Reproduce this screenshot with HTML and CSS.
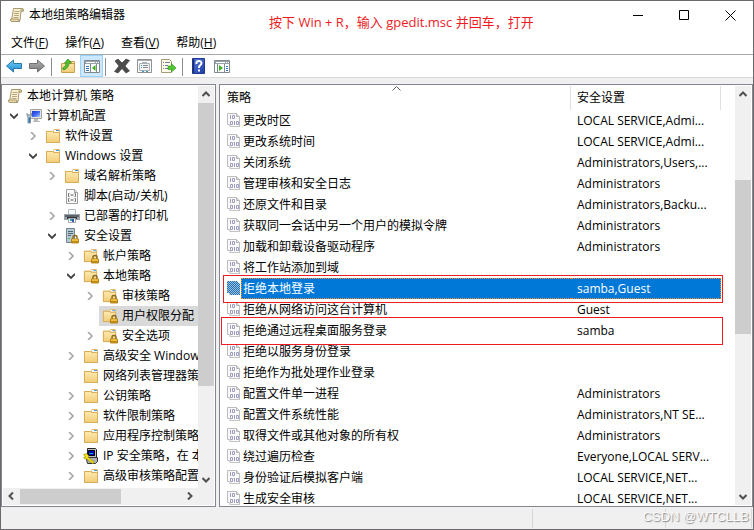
FILE: index.html
```html
<!DOCTYPE html>
<html lang="zh-CN">
<head>
  <meta charset="UTF-8">
  <meta name="viewport" content="width=device-width, initial-scale=1.0">
  <title>本地组策略编辑器</title>
  <link rel="stylesheet" href="styles.css">
</head>
<body>

<svg class="sprite" aria-hidden="true">
  <defs>
    <linearGradient id="gFolder" x1="0" y1="0" x2="0" y2="1"><stop offset="0" stop-color="#ffeab0"/><stop offset="1" stop-color="#f0cc78"/></linearGradient>
    <linearGradient id="gBlue" x1="0" y1="0" x2="0" y2="1"><stop offset="0" stop-color="#7fd0f5"/><stop offset="1" stop-color="#1088d8"/></linearGradient>
    <linearGradient id="gGray" x1="0" y1="0" x2="0" y2="1"><stop offset="0" stop-color="#b4b4b4"/><stop offset="1" stop-color="#777"/></linearGradient>
    <linearGradient id="gHelp" x1="0" y1="0" x2="1" y2="1"><stop offset="0" stop-color="#5c80dc"/><stop offset="1" stop-color="#1c3aa4"/></linearGradient>
    <linearGradient id="gScreen" x1="0" y1="0" x2="1" y2="1"><stop offset="0" stop-color="#2038d0"/><stop offset=".5" stop-color="#3c64f0"/><stop offset="1" stop-color="#a8d0ff"/></linearGradient>
    <pattern id="dither" width="2" height="2" patternUnits="userSpaceOnUse"><path fill="#0078d7" d="M0 0h1v1H0zM1 1h1v1H1z"/></pattern>
  </defs>
  <symbol id="scroll" viewBox="0 0 16 16">
    <path fill="#f8f0d0" stroke="#a89a70" d="M4.500 1.500h9q1.500.5 1 2.500h-2.500l-1 9.500H2.500z"/>
    <path fill="#e8dba8" stroke="#a89a70" d="M12 4q-.5-2 1-2.500 2 0 1.500 2.500zM1.500 12h8q0 2.500 1.500 2.500H3Q1 14.500 1.500 12z"/>
    <path stroke="#b8a880" d="M5.500 4.500h5M5 6.500h5M5 8.500h5M4.500 10.500h5"/>
  </symbol>
  <symbol id="folder" viewBox="0 0 16 16">
    <path fill="#e4b962" d="M1 3h7l1-2h5l1 1v13H1z"/>
    <path fill="#fff" d="M9 2h5v2H9z"/>
    <path fill="#3c98e8" d="M11 2h3v1h-3z"/>
    <path fill="url(#gFolder)" stroke="#d8ac58" d="M1.500 3.500h6l1 1h6v10h-13z"/>
  </symbol>
  <symbol id="padlock" viewBox="0 0 8 9">
    <path fill="none" stroke="#8c6a20" stroke-width="1.400" d="M2 5V2.500Q2 1 4 1t2 1.500V5"/>
    <path fill="#e0a820" stroke="#a87408" stroke-width=".8" d="M.5 4.500h7v4h-7z"/>
    <path stroke="#ffd860" d="M1 5.500h6"/>
    <path stroke="#b07c10" d="M1 7.300h6"/>
  </symbol>
  <symbol id="folder-lock" viewBox="0 0 16 16">
    <use href="#folder" x="0" y="0" width="15" height="15"/>
    <use href="#padlock" x="8" y="6" width="8" height="10"/>
  </symbol>
  <symbol id="computer" viewBox="0 0 16 16">
    <path fill="#e4e4dc" stroke="#a4a4a0" d="M4.500 1.500h11v9h-11z"/>
    <path fill="url(#gScreen)" d="M6 3h8v6H6z"/>
    <path fill="#b8b8b4" d="M8 11h4v2h2v1H7v-1h1z"/>
    <path fill="#b8c8d0" stroke="#708090" stroke-width=".8" d="M1 5.500v2l1 1.500v6h2.500V9l1-1.500v-2L4.500 7H2z"/>
    <path stroke="#2878b8" stroke-width="1.500" d="M3.300 9.500v5"/>
  </symbol>
  <symbol id="script" viewBox="0 0 16 16">
    <path fill="#fafafa" stroke="#a0a0a0" d="M2.500 1.500h8l3 3v11h-11z"/>
    <path fill="#ddd" stroke="#a0a0a0" d="M10.500 1.500v3h3"/>
    <path fill="none" stroke="#777" d="M5.500 5.500h-1v3h1M10.500 5.500h1v3h-1M5.500 10.500h-1v3h1M10.500 10.500h1v3h-1"/>
    <path stroke="#555" d="M6.500 7h3M6.500 12h3"/>
  </symbol>
  <symbol id="printer" viewBox="0 0 16 16">
    <path fill="#f4f8fa" stroke="#b4bcc4" d="M4.500 1.500h7v5h-7z"/>
    <path fill="#9aa2aa" d="M0 6h16v6H0z"/>
    <path fill="#5c646c" d="M1 7h14v2H1z"/>
    <path fill="#333" d="M3 9h10v2H3z"/>
    <path fill="#fff" stroke="#a0a8b0" d="M4.500 10.500h7v4h-7z"/>
    <path fill="#38a0b0" d="M6 11h2v2H6z"/><path fill="#3858b8" d="M8 11h2v3H8z"/>
  </symbol>
  <symbol id="server" viewBox="0 0 16 16">
    <path fill="#b8c8d0" stroke="#708490" d="M2.500.5h8v14h-8z"/>
    <path stroke="#50687c" d="M4 3.500h5M4 5.500h5M4 7.500h3"/>
    <path fill="#40b860" d="M4 10h2v1H4z"/>
    <use href="#padlock" x="7" y="6" width="8" height="10"/>
  </symbol>
  <symbol id="ipsec" viewBox="0 0 16 16">
    <path fill="#c0c0c0" stroke="#222" d="M4.500.500h8l1 1v8h-9z"/>
    <path fill="#0000c0" stroke="#000" d="M5.500 2.500h6v5h-6z"/>
    <path stroke="#00b0d0" d="M6 5.500h4"/>
    <path fill="#b0b0b0" stroke="#333" d="M3.500 11.500l3-2h8v4l-2 2h-8z"/>
    <path fill="#f4e010" stroke="#948400" stroke-width=".6" d="M.5 6.500l3-1 2 2v2l5.500 4.500-1 2-6-5H2L.5 9.500l2-.5z"/>
  </symbol>
  <symbol id="policy" viewBox="0 0 14 16">
    <path fill="#fafafa" stroke="#bcbcbc" d="M.5 1.500h9l3 3v10h-9l-1-2h-2z"/>
    <path fill="#ddd" stroke="#b4b4b4" d="M9.500 1.500v3h3"/>
    <path fill="#c4c4c4" d="M2 14h11v1H3z"/>
    <g fill="none" stroke="#9c9cc0"><path d="M3.500 3v4M5.500 3.500h2v3h-2zM3.500 9.500h2v3h-2zM7.500 9v4M9.500 9.500h2v3h-2z"/></g>
  </symbol>
  <symbol id="policy-selected" viewBox="0 0 14 16">
    <path fill="#b8b8b8" d="M0 1h10l3 3v11H3l-1-2H0z"/>
    <path fill="url(#dither)" d="M0 1h10l3 3v11H3l-1-2H0z"/>
  </symbol>
  <symbol id="back" viewBox="0 0 16 16">
    <path fill="url(#gBlue)" stroke="#2878a8" stroke-linejoin="round" d="M.5 8l7-6v3.500h8v5h-8V14z"/>
  </symbol>
  <symbol id="forward" viewBox="0 0 16 16">
    <path fill="url(#gGray)" stroke="#707070" stroke-linejoin="round" d="M15.500 8l-7-6v3.500h-8v5h8V14z"/>
  </symbol>
  <symbol id="up" viewBox="0 0 16 16">
    <path fill="url(#gFolder)" stroke="#c8a050" d="M1.500 5.500h6l1-2h6v11h-13z"/>
    <path stroke="#c8a050" d="M9 5.500h5"/>
    <path fill="#50c030" stroke="#2c8c18" stroke-width=".7" d="M2.500 10Q6 9 6.200 5H4.500l3.500-4 3.500 4H9Q9 10 3.500 12z"/>
  </symbol>
  <symbol id="tree-pane" viewBox="0 0 16 16">
    <path fill="#fff" stroke="#808890" d="M.5 2.500h15v12H.5z"/>
    <path fill="#9aa2aa" d="M1 3h14v3H1z"/>
    <path fill="#fff" d="M2 4h9v1H2zM12 4h1v1h-1zM14 4h1v1h-1z"/>
    <path stroke="#808890" d="M6.500 6v8.500M12.500 6v8.500"/>
    <path stroke="#3878c0" d="M2 8.500h3M2 10.500h3M2 12.500h3"/>
    <path fill="#38b020" d="M11.500 7v6L8 10z"/>
  </symbol>
  <symbol id="action-pane" viewBox="0 0 16 16">
    <path fill="#fff" stroke="#808890" d="M.5 2.500h15v12H.5z"/>
    <path fill="#9aa2aa" d="M1 3h14v3H1z"/>
    <path fill="#fff" d="M2 4h9v1H2zM12 4h1v1h-1zM14 4h1v1h-1z"/>
    <path stroke="#808890" d="M3.500 6v8.500M10.500 6v8.500"/>
    <path stroke="#3878c0" d="M12 8.500h2M12 10.500h2M12 12.500h2"/>
    <path fill="#38b020" d="M5 7v6l4-3z"/>
  </symbol>
  <symbol id="delete" viewBox="0 0 16 16">
    <path fill="#4c4c4c" stroke="#333" stroke-width=".6" d="M1 3l3-2 4 4 4-4 3.500 1.500L11 8l4.500 5-3.500 2-4-4.500L4 15l-3.500-1.500L5 8z"/>
  </symbol>
  <symbol id="properties" viewBox="0 0 16 16">
    <path fill="#fff" stroke="#909090" d="M.5 1.500h14v13H.5z"/>
    <path stroke="#b0b0b0" d="M1 2.500h13"/>
    <path fill="#f4f4f4" stroke="#a8b0b8" d="M2.500 5.500h10v7h-10z"/>
    <path stroke="#a8b0b8" d="M5 4.500h5"/>
    <path stroke="#38a0c8" d="M4 7.500h1M4 9.500h1M5 13.500h2M9 13.500h2"/>
    <path stroke="#808890" d="M6 7.500h5M6 9.500h5"/>
  </symbol>
  <symbol id="export" viewBox="0 0 16 16">
    <path fill="#fffbe8" stroke="#a89c78" d="M1.500 1.500h8l2 2v11h-10z"/>
    <path stroke="#7080a0" d="M3 4.500h1M3 7.500h1M3 10.500h1M5 4.500h5M5 7.500h3M5 10.500h3"/>
    <path fill="#50c830" stroke="#30901c" stroke-width=".6" d="M8 8h3.500V5.500L16 10l-4.500 4v-2.500H8z"/>
  </symbol>
  <symbol id="help" viewBox="0 0 16 16">
    <path fill="url(#gHelp)" stroke="#203890" d="M1.500.5h12v15h-12z"/>
    <path stroke="#182c78" stroke-width="1.500" d="M2.500 1v14"/>
    <path fill="none" stroke="#fff" stroke-width="2" d="M5.500 6V4.500Q6 3 8 3t2.500 2Q10.500 6.500 9 7.500 8 8 8 10M8 11.500v2"/>
  </symbol>
  <symbol id="chev-up" viewBox="0 0 8 8"><path fill="none" stroke="#505050" stroke-width="2" d="M.5 6L4 2.500 7.500 6"/></symbol>
  <symbol id="chev-down" viewBox="0 0 8 8"><path fill="none" stroke="#505050" stroke-width="2" d="M.5 2L4 5.500 7.500 2"/></symbol>
  <symbol id="chev-left" viewBox="0 0 8 8"><path fill="none" stroke="#505050" stroke-width="2" d="M6 .5L2.500 4 6 7.500"/></symbol>
  <symbol id="chev-right" viewBox="0 0 8 8"><path fill="none" stroke="#505050" stroke-width="2" d="M2 .5L5.500 4 2 7.500"/></symbol>
  <symbol id="expanded" viewBox="0 0 8 8"><path fill="none" stroke="#404040" stroke-width="1.800" d="M0 2l4 4 4-4"/></symbol>
  <symbol id="collapsed" viewBox="0 0 8 8"><path fill="none" stroke="#a6a6a6" stroke-width="1.600" d="M2 0l4 4-4 4"/></symbol>
</svg>

<div class="window">
  <header class="titlebar">
    <svg class="icon"><use href="#scroll"/></svg>
    <h1>本地组策略编辑器</h1>
    <p class="note">按下 Win + R，输入 gpedit.msc 并回车，打开</p>
    <div class="controls">
      <button aria-label="最小化"><svg width="11" height="11"><path stroke="#000" d="M0 5.500h10"/></svg></button>
      <button aria-label="最大化"><svg width="11" height="11"><path fill="none" stroke="#000" d="M.5.5h9v9h-9z"/></svg></button>
      <button aria-label="关闭"><svg width="11" height="11"><path stroke="#000" d="M.5.5l10 10M10.500.5l-10 10"/></svg></button>
    </div>
  </header>

  <nav class="menubar">
    <button>文件(<u>F</u>)</button>
    <button>操作(<u>A</u>)</button>
    <button>查看(<u>V</u>)</button>
    <button>帮助(<u>H</u>)</button>
  </nav>

  <div class="toolbar">
    <button aria-label="后退"><svg class="icon"><use href="#back"/></svg></button>
    <button aria-label="前进"><svg class="icon"><use href="#forward"/></svg></button>
    <span class="sep"></span>
    <button aria-label="向上"><svg class="icon"><use href="#up"/></svg></button>
    <button class="active" aria-label="显示控制台树"><svg class="icon"><use href="#tree-pane"/></svg></button>
    <span class="sep"></span>
    <button aria-label="删除"><svg class="icon"><use href="#delete"/></svg></button>
    <button aria-label="属性"><svg class="icon"><use href="#properties"/></svg></button>
    <button aria-label="导出列表"><svg class="icon"><use href="#export"/></svg></button>
    <span class="sep"></span>
    <button aria-label="帮助"><svg class="icon"><use href="#help"/></svg></button>
    <button aria-label="显示操作窗格"><svg class="icon"><use href="#action-pane"/></svg></button>
  </div>

  <main class="panes">
    <section class="pane tree-pane">
      <div class="pane-row">
        <div class="tree">
          <div class="node root"><span class="item"><svg class="icon"><use href="#scroll"/></svg>本地计算机 策略</span></div>
          <ul>
            <li>
              <div class="node"><button class="toggle" aria-label="折叠"><svg><use href="#expanded"/></svg></button><span class="item"><svg class="icon"><use href="#computer"/></svg>计算机配置</span></div>
              <ul>
                <li><div class="node"><button class="toggle" aria-label="展开"><svg><use href="#collapsed"/></svg></button><span class="item"><svg class="icon"><use href="#folder"/></svg>软件设置</span></div></li>
                <li>
                  <div class="node"><button class="toggle" aria-label="折叠"><svg><use href="#expanded"/></svg></button><span class="item"><svg class="icon"><use href="#folder"/></svg>Windows 设置</span></div>
                  <ul>
                    <li><div class="node"><button class="toggle" aria-label="展开"><svg><use href="#collapsed"/></svg></button><span class="item"><svg class="icon"><use href="#folder"/></svg>域名解析策略</span></div></li>
                    <li><div class="node leaf"><span class="item"><svg class="icon"><use href="#script"/></svg>脚本(启动/关机)</span></div></li>
                    <li><div class="node"><button class="toggle" aria-label="展开"><svg><use href="#collapsed"/></svg></button><span class="item"><svg class="icon"><use href="#printer"/></svg>已部署的打印机</span></div></li>
                    <li>
                      <div class="node"><button class="toggle" aria-label="折叠"><svg><use href="#expanded"/></svg></button><span class="item"><svg class="icon"><use href="#server"/></svg>安全设置</span></div>
                      <ul>
                        <li><div class="node"><button class="toggle" aria-label="展开"><svg><use href="#collapsed"/></svg></button><span class="item"><svg class="icon"><use href="#folder-lock"/></svg>帐户策略</span></div></li>
                        <li>
                          <div class="node"><button class="toggle" aria-label="折叠"><svg><use href="#expanded"/></svg></button><span class="item"><svg class="icon"><use href="#folder-lock"/></svg>本地策略</span></div>
                          <ul>
                            <li><div class="node"><button class="toggle" aria-label="展开"><svg><use href="#collapsed"/></svg></button><span class="item"><svg class="icon"><use href="#folder-lock"/></svg>审核策略</span></div></li>
                            <li><div class="node leaf current"><span class="item"><svg class="icon"><use href="#folder-lock"/></svg>用户权限分配</span></div></li>
                            <li><div class="node"><button class="toggle" aria-label="展开"><svg><use href="#collapsed"/></svg></button><span class="item"><svg class="icon"><use href="#folder-lock"/></svg>安全选项</span></div></li>
                          </ul>
                        </li>
                        <li><div class="node"><button class="toggle" aria-label="展开"><svg><use href="#collapsed"/></svg></button><span class="item"><svg class="icon"><use href="#folder"/></svg>高级安全 Windows Defender 防火墙</span></div></li>
                        <li><div class="node leaf"><span class="item"><svg class="icon"><use href="#folder"/></svg>网络列表管理器策略</span></div></li>
                        <li><div class="node"><button class="toggle" aria-label="展开"><svg><use href="#collapsed"/></svg></button><span class="item"><svg class="icon"><use href="#folder"/></svg>公钥策略</span></div></li>
                        <li><div class="node"><button class="toggle" aria-label="展开"><svg><use href="#collapsed"/></svg></button><span class="item"><svg class="icon"><use href="#folder"/></svg>软件限制策略</span></div></li>
                        <li><div class="node"><button class="toggle" aria-label="展开"><svg><use href="#collapsed"/></svg></button><span class="item"><svg class="icon"><use href="#folder"/></svg>应用程序控制策略</span></div></li>
                        <li><div class="node"><button class="toggle" aria-label="展开"><svg><use href="#collapsed"/></svg></button><span class="item"><svg class="icon"><use href="#ipsec"/></svg>IP 安全策略，在 本地计算机</span></div></li>
                        <li><div class="node"><button class="toggle" aria-label="展开"><svg><use href="#collapsed"/></svg></button><span class="item"><svg class="icon"><use href="#folder"/></svg>高级审核策略配置</span></div></li>
                      </ul>
                    </li>
                  </ul>
                </li>
              </ul>
            </li>
          </ul>
        </div>
        <div class="vscroll">
          <button aria-label="向上滚动"><svg><use href="#chev-up"/></svg></button>
          <div class="track"><div class="thumb tree-thumb"></div></div>
          <button aria-label="向下滚动"><svg><use href="#chev-down"/></svg></button>
        </div>
      </div>
      <div class="hscroll">
        <button aria-label="向左滚动"><svg><use href="#chev-left"/></svg></button>
        <div class="track"><div class="thumb"></div></div>
        <button aria-label="向右滚动"><svg><use href="#chev-right"/></svg></button>
      </div>
    </section>

    <section class="pane list-pane">
      <div class="list">
        <svg class="sort" width="9" height="5"><path fill="none" stroke="#606060" d="M.5 4.500l4-4 4 4"/></svg>
        <table>
          <colgroup><col><col class="col-setting"><col class="col-rest"></colgroup>
          <thead>
            <tr><th>策略</th><th>安全设置</th><th></th></tr>
          </thead>
          <tbody>
            <tr><td><div class="cell"><svg class="doc"><use href="#policy"/></svg><span>更改时区</span></div></td><td>LOCAL SERVICE,Admi...</td><td></td></tr>
            <tr><td><div class="cell"><svg class="doc"><use href="#policy"/></svg><span>更改系统时间</span></div></td><td>LOCAL SERVICE,Admi...</td><td></td></tr>
            <tr><td><div class="cell"><svg class="doc"><use href="#policy"/></svg><span>关闭系统</span></div></td><td>Administrators,Users,...</td><td></td></tr>
            <tr><td><div class="cell"><svg class="doc"><use href="#policy"/></svg><span>管理审核和安全日志</span></div></td><td>Administrators</td><td></td></tr>
            <tr><td><div class="cell"><svg class="doc"><use href="#policy"/></svg><span>还原文件和目录</span></div></td><td>Administrators,Backu...</td><td></td></tr>
            <tr><td><div class="cell"><svg class="doc"><use href="#policy"/></svg><span>获取同一会话中另一个用户的模拟令牌</span></div></td><td>Administrators</td><td></td></tr>
            <tr><td><div class="cell"><svg class="doc"><use href="#policy"/></svg><span>加载和卸载设备驱动程序</span></div></td><td>Administrators</td><td></td></tr>
            <tr><td><div class="cell"><svg class="doc"><use href="#policy"/></svg><span>将工作站添加到域</span></div></td><td></td><td></td></tr>
            <tr class="selected marked"><td><div class="cell"><svg class="doc"><use href="#policy-selected"/></svg><span>拒绝本地登录</span></div></td><td>samba,Guest</td><td></td></tr>
            <tr><td><div class="cell"><svg class="doc"><use href="#policy"/></svg><span>拒绝从网络访问这台计算机</span></div></td><td>Guest</td><td></td></tr>
            <tr class="marked"><td><div class="cell"><svg class="doc"><use href="#policy"/></svg><span>拒绝通过远程桌面服务登录</span></div></td><td>samba</td><td></td></tr>
            <tr><td><div class="cell"><svg class="doc"><use href="#policy"/></svg><span>拒绝以服务身份登录</span></div></td><td></td><td></td></tr>
            <tr><td><div class="cell"><svg class="doc"><use href="#policy"/></svg><span>拒绝作为批处理作业登录</span></div></td><td></td><td></td></tr>
            <tr><td><div class="cell"><svg class="doc"><use href="#policy"/></svg><span>配置文件单一进程</span></div></td><td>Administrators</td><td></td></tr>
            <tr><td><div class="cell"><svg class="doc"><use href="#policy"/></svg><span>配置文件系统性能</span></div></td><td>Administrators,NT SE...</td><td></td></tr>
            <tr><td><div class="cell"><svg class="doc"><use href="#policy"/></svg><span>取得文件或其他对象的所有权</span></div></td><td>Administrators</td><td></td></tr>
            <tr><td><div class="cell"><svg class="doc"><use href="#policy"/></svg><span>绕过遍历检查</span></div></td><td>Everyone,LOCAL SERV...</td><td></td></tr>
            <tr><td><div class="cell"><svg class="doc"><use href="#policy"/></svg><span>身份验证后模拟客户端</span></div></td><td>LOCAL SERVICE,NET...</td><td></td></tr>
            <tr><td><div class="cell"><svg class="doc"><use href="#policy"/></svg><span>生成安全审核</span></div></td><td>LOCAL SERVICE,NET...</td><td></td></tr>
          </tbody>
        </table>
      </div>
      <div class="vscroll">
        <button aria-label="向上滚动"><svg><use href="#chev-up"/></svg></button>
        <div class="track"><div class="thumb list-thumb"></div></div>
        <button aria-label="向下滚动"><svg><use href="#chev-down"/></svg></button>
      </div>
    </section>
  </main>

  <footer class="statusbar">
    <span class="main-status"></span>
    <span class="status"></span>
    <span class="status last"></span>
    <span class="watermark">CSDN @WTCLLB</span>
  </footer>
</div>

</body>
</html>
```

FILE: styles.css
```css
* {
  box-sizing: border-box;
}
body {
  margin: 0;
  font-family: "Open Sans", "Noto Sans CJK SC", sans-serif;
  font-size: 12px;
  line-height: 20px;
  color: #000;
}
button {
  padding: 0;
  border: none;
  background: none;
  font: inherit;
  color: inherit;
}
svg {
  display: block;
  flex: none;
}
.sprite {
  position: absolute;
  width: 0;
  height: 0;
}
.icon {
  width: 16px;
  height: 16px;
}
.window {
  display: flex;
  flex-direction: column;
  height: 100vh;
  border: 1px solid #6b696b;
  background: #f0f0f0;
}

/* title bar */
.titlebar {
  display: flex;
  height: 30px;
  padding-left: 8px;
  background: #fff;
}
.titlebar .icon {
  margin-top: 6px;
}
h1 {
  margin: 4px 0 0 4px;
  font-size: 12px;
  font-weight: normal;
}
.note {
  flex: 1;
  margin: 11px 0 0 144px;
  font-size: 13px;
  color: #ed1c24;
  white-space: nowrap;
}
.controls {
  display: flex;
}
.controls button {
  display: flex;
  align-items: center;
  justify-content: center;
  width: 46px;
  height: 28px;
}

/* menu and toolbar */
.menubar {
  display: flex;
  gap: 17px;
  height: 24px;
  padding-left: 10px;
  background: #fff;
  border-bottom: 1px solid #aaa;
}
.toolbar {
  display: flex;
  height: 23px;
  padding-left: 2px;
  background: #fff;
  border-bottom: 1px solid #d9d9d9;
}
.toolbar button {
  display: flex;
  align-items: center;
  width: 23px;
  height: 22px;
  padding-left: 3px;
}
.toolbar .active {
  background: #cce8ff;
  border: 1px solid #99d1ff;
}
.sep {
  width: 1px;
  height: 18px;
  margin: 3px 5px 0 2px;
  background: #8c8c8c;
}

/* panes */
.panes {
  display: flex;
  flex: 1;
  gap: 3px;
  min-height: 0;
  padding-top: 6px;
}
.pane {
  display: flex;
  padding: 1px;
  background: #fff;
  border: 1px solid #828790;
}
.tree-pane {
  flex-direction: column;
  flex: none;
  width: 215px;
}
.pane-row {
  display: flex;
  flex: 1;
  min-height: 0;
}
.tree {
  flex: 1;
  overflow: hidden;
  white-space: nowrap;
}
.tree ul {
  margin: 0;
  padding: 0;
  list-style: none;
}
.tree ul ul {
  padding-left: 19px;
}
.node {
  display: flex;
  height: 20px;
  padding-left: 3px;
}
.root {
  padding-left: 1px;
}
.leaf {
  padding-left: 20px;
}
.toggle {
  display: flex;
  flex: none;
  align-items: center;
  justify-content: center;
  width: 16px;
  height: 20px;
  margin-right: 1px;
}
.toggle svg {
  width: 8px;
  height: 8px;
}
.item {
  display: flex;
  flex: 1 0 auto;
  align-items: center;
  gap: 4px;
  padding-left: 3px;
}
.current .item {
  background: #d9d9d9;
}

/* scroll bars */
.vscroll {
  display: flex;
  flex-direction: column;
  width: 16px;
  background: #f0f0f0;
}
.hscroll {
  display: flex;
  height: 17px;
  padding-right: 16px;
  background: #f0f0f0;
}
.vscroll button,
.hscroll button {
  display: flex;
  align-items: center;
  justify-content: center;
  width: 16px;
  height: 16px;
}
.vscroll svg,
.hscroll svg {
  width: 8px;
  height: 8px;
}
.track {
  flex: 1;
}
.vscroll .track {
  margin: 1px 0;
}
.hscroll .track {
  margin: 1px;
}
.thumb {
  background: #cdcdcd;
}
.tree-thumb {
  height: 77%;
}
.list-thumb {
  height: 40%;
  margin-top: 77px;
}
.hscroll .thumb {
  width: 63%;
  height: 15px;
}

/* policy list */
.list-pane {
  flex: 1;
  min-width: 0;
}
.list {
  position: relative;
  flex: 1;
  overflow: hidden;
}
.sort {
  position: absolute;
  top: 0;
  right: 50%;
  margin-right: 77px;
}
table {
  width: 100%;
  table-layout: fixed;
  border-collapse: separate;
  border-spacing: 0;
}
.col-setting {
  width: 150px;
}
.col-rest {
  width: 14px;
}
th {
  height: 24px;
  padding: 0 0 0 6px;
  border-right: 1px solid #e0e0e0;
  font-weight: normal;
  text-align: left;
}
th:last-child {
  border-right: none;
}
td {
  height: 21px;
  padding: 0 0 0 6px;
  line-height: 19px;
  white-space: nowrap;
}
td:first-child,
td:last-child {
  padding: 0;
}
.cell {
  display: flex;
  padding-left: 6px;
}
.doc {
  width: 14px;
  height: 16px;
  margin-top: 2px;
}
.cell span {
  flex: 1;
  padding-left: 2px;
  border: 1px solid transparent;
  border-width: 1px 0;
}
.selected .cell span,
.selected td:nth-child(2) {
  background: #0078d7;
  border: 1px dotted #ff8728;
  border-width: 1px 0;
  color: #fff;
}
.selected .cell span {
  padding-left: 1px;
  border-left-width: 1px;
}
.selected td:nth-child(2) {
  border-right-width: 1px;
}

/* red frames round the two policies to change */
.marked {
  position: relative;
}
.marked td:first-child::after {
  content: "";
  position: absolute;
  top: -3px;
  right: 12px;
  bottom: -4px;
  left: 0;
  border: 1px solid #ed1c24;
}
.selected td:first-child::after {
  left: 2px;
}

/* status bar */
.statusbar {
  position: relative;
  display: flex;
  height: 22px;
  padding: 2px 1px 1px 0;
}
.main-status {
  flex: 1;
}
.status {
  width: 133px;
  border-left: 1px solid #d7d7d7;
}
.last {
  width: 87px;
  border-right: 1px solid #d7d7d7;
}
.watermark {
  position: absolute;
  top: 0;
  right: 4px;
  font-family: "Liberation Sans", sans-serif;
  font-size: 13px;
  color: #fafafa;
  text-shadow: 1px 1px 1px #888;
}
```
